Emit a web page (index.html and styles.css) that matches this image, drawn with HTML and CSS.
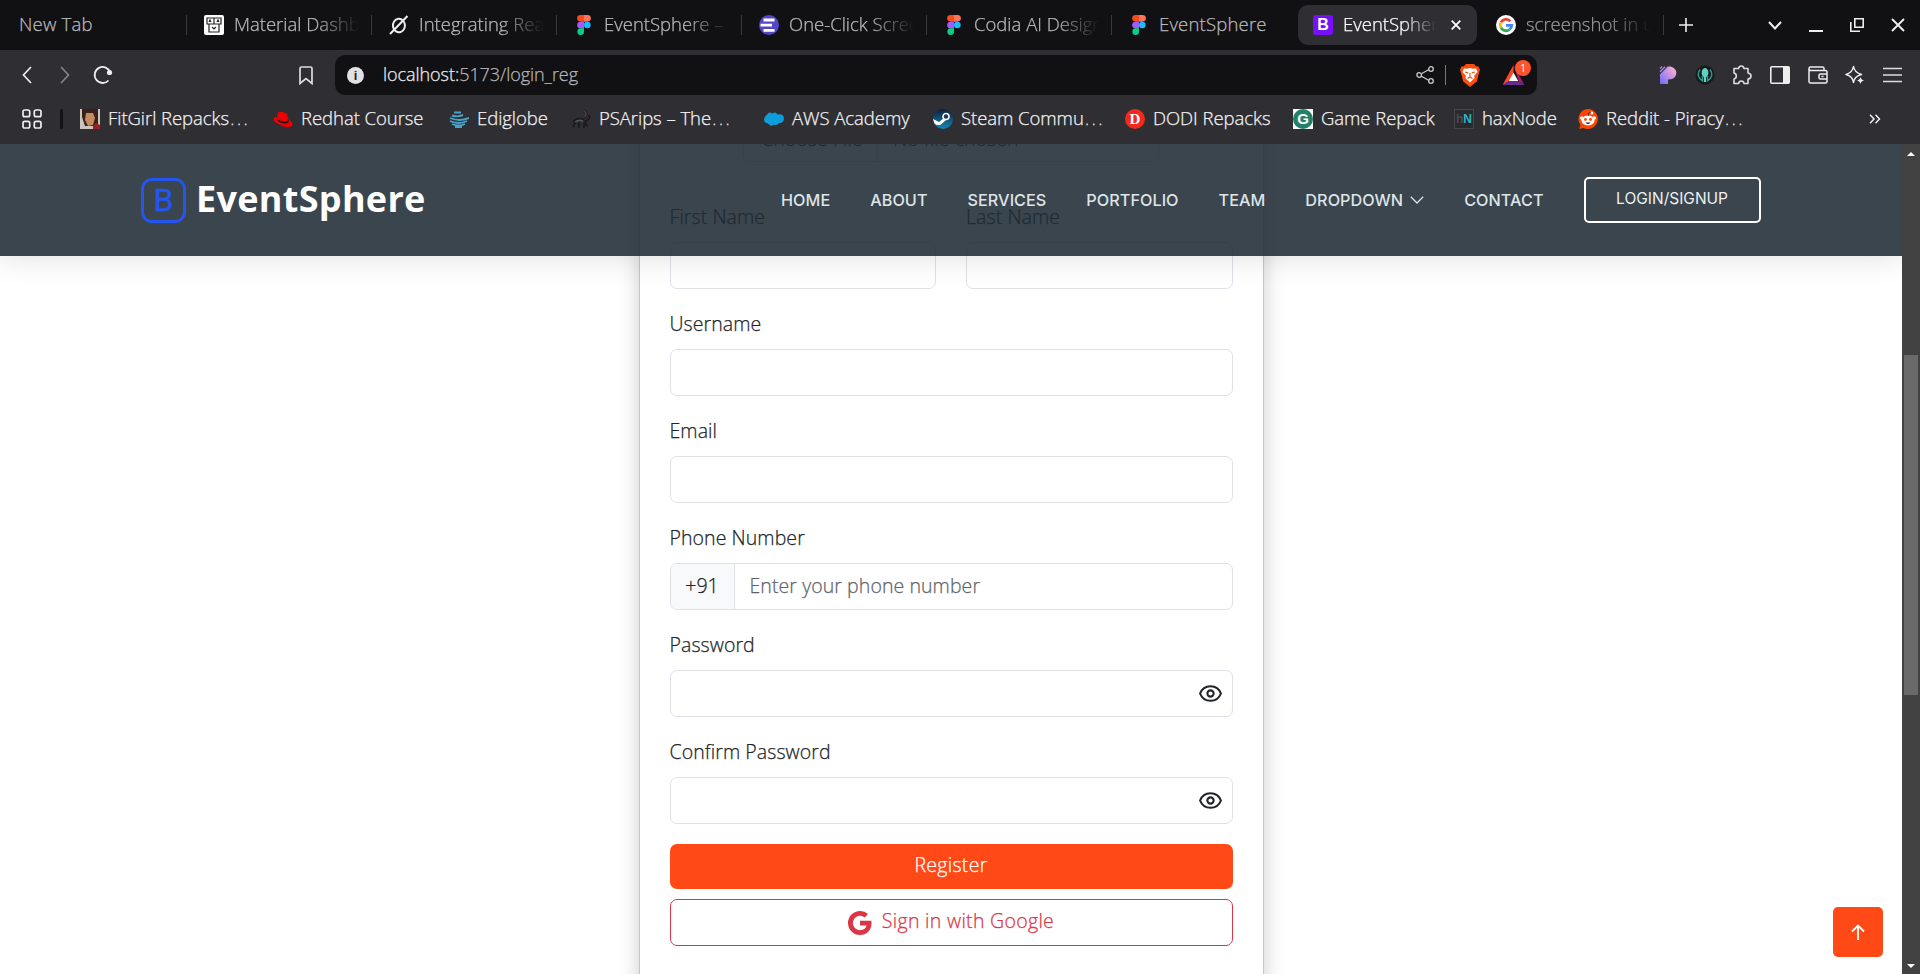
FILE: index.html
```html
<!DOCTYPE html>
<html lang="en">
<head>
<meta charset="utf-8">
<title>EventSphere</title>
<link rel="stylesheet" href="styles.css">
</head>
<body>
<svg class="defs" width="0" height="0">
  <symbol id="figma" viewBox="0 0 14 20"><path fill="#f24e1e" d="M7 0H3.500a3.300 3.300 0 0 0 0 6.660H7z"/><path fill="#ff7262" d="M7 0h3.500a3.300 3.300 0 0 1 0 6.660H7z"/><path fill="#a259ff" d="M7 6.660H3.500a3.300 3.300 0 0 0 0 6.670H7z"/><circle cx="10.300" cy="10" r="3.330" fill="#1abcfe"/><path fill="#0acf83" d="M7 13.330H3.500A3.330 3.330 0 1 0 7 16.700z"/></symbol>
  <symbol id="eye" viewBox="0 0 24 24"><path fill="none" stroke="#212529" stroke-width="2" d="M2 12C3.500 8 7 5 12 5s8.500 3 10 7c-1.500 4-5 7-10 7S3.500 16 2 12z"/><circle cx="12" cy="12" r="3" fill="none" stroke="#212529" stroke-width="2"/></symbol>
</svg>
<div class="browser">
  <div class="tabs">
    <div class="tab first"><span class="title t-new">New Tab</span></div>
    <div class="tab"><svg class="fav" viewBox="0 0 20 20"><rect width="20" height="20" rx="2" fill="#fff"/><path d="M3 3h14v6H3zM10 3v6M5 9v8h10V9M8 12l2 2 2-2M5 7l1-2 1 2M13 7l1-2 1 2" fill="none" stroke="#222" stroke-width="1.200"/></svg><span class="title">Material Dashboard</span></div>
    <div class="tab"><svg class="fav" viewBox="0 0 20 20"><path d="M14 5.500A6 6.800 0 1 0 15.500 13c.9-2.500.5-5-1.500-7.500zM1 19L18.500 1" fill="none" stroke="#eee" stroke-width="2"/></svg><span class="title">Integrating React</span></div>
    <div class="tab"><svg class="fav" viewBox="0 0 14 20"><use href="#figma"/></svg><span class="title">EventSphere – Figma</span></div>
    <div class="tab"><svg class="fav" viewBox="0 0 20 20"><circle cx="10" cy="10" r="10" fill="#5347c5"/><path d="M4.500 5h11M1.500 10.200H13M4.500 15.300h11" stroke="#fff" stroke-width="2.800"/></svg><span class="title">One-Click Screenshot</span></div>
    <div class="tab"><svg class="fav" viewBox="0 0 14 20"><use href="#figma"/></svg><span class="title">Codia AI Design</span></div>
    <div class="tab noline"><svg class="fav" viewBox="0 0 14 20"><use href="#figma"/></svg><span class="title t-new">EventSphere</span></div>
    <div class="tab active"><span class="fav bs">B</span><span class="title">EventSphere</span><svg class="x" viewBox="0 0 10 10"><path d="M.7.7l8.600 8.600M9.300.7L.7 9.300" stroke="#fff" stroke-width="1.800"/></svg></div>
    <div class="tab"><svg class="fav" viewBox="0 0 20 20"><circle cx="10" cy="10" r="10" fill="#fff"/><g fill="none" stroke-width="2.800"><path stroke="#ea4335" d="M14.300 6.200A5.800 5.800 0 0 0 5 7.200"/><path stroke="#fbbc05" d="M5 7.200a5.800 5.800 0 0 0 0 5.600"/><path stroke="#34a853" d="M5 12.800a5.800 5.800 0 0 0 8.600 1.700"/><path stroke="#4285f4" d="M13.600 14.500a5.800 5.800 0 0 0 2.100-4.100H10"/></g></svg><span class="title dim">screenshot in ubuntu</span></div>
    <svg class="plus" viewBox="0 0 14 14"><path d="M7 0v14M0 7h14" stroke="#eee" stroke-width="1.600"/></svg>
    <div class="win">
      <svg width="14" height="9" viewBox="0 0 14 9"><path d="M1 1l6 6.500L13 1" fill="none" stroke="#eee" stroke-width="2"/></svg>
      <svg width="14" height="14" viewBox="0 0 14 14"><path d="M0 13h14" stroke="#eee" stroke-width="2"/></svg>
      <svg width="14" height="14" viewBox="0 0 14 14"><path d="M4.800.8h8.400v8.400H4.800zM.8 4v9.200H10" fill="none" stroke="#eee" stroke-width="1.600"/></svg>
      <svg width="14" height="14" viewBox="0 0 14 14"><path d="M1 1l12 12M13 1L1 13" stroke="#eee" stroke-width="1.900"/></svg>
    </div>
  </div>
  <div class="toolbar">
    <div class="navbtns">
      <svg width="10" height="18" viewBox="0 0 10 18"><path d="M9 1L1.500 9 9 17" fill="none" stroke="#eee" stroke-width="1.700"/></svg>
      <svg width="10" height="18" viewBox="0 0 10 18"><path d="M1 1l7.500 8L1 17" fill="none" stroke="#85848a" stroke-width="1.700"/></svg>
      <svg class="reload" width="20" height="20" viewBox="0 0 20 20"><path d="M15.500 15.500A8 8 0 1 1 17.300 7.500" fill="none" stroke="#eee" stroke-width="1.800"/><circle cx="16.500" cy="7.500" r="2.600" fill="#eee"/></svg>
    </div>
    <svg class="bookmark" viewBox="0 0 14 19"><path d="M1 2.500Q1 1 2.500 1h9Q13 1 13 2.500V17.500l-6-5-6 5z" fill="none" stroke="#ddd" stroke-width="1.700"/></svg>
    <div class="url">
      <span class="info">i</span><span class="addr">localhost:<span class="path">5173/login_reg</span></span>
      <svg class="share" viewBox="0 0 18 18"><path d="M5 8l8-4.500M5 10l8 4.500" stroke="#ccc" stroke-width="1.200"/><g fill="none" stroke="#ccc" stroke-width="1.300"><circle cx="3.200" cy="9" r="2.300"/><circle cx="15" cy="3" r="2.300"/><circle cx="15" cy="15" r="2.300"/></g></svg>
      <span class="sep"></span>
      <svg class="brave" viewBox="0 0 20 23"><path d="M6 0h8l2 2.200 2.500.3L20 6l-.7 2-2.500 9.500L10 23l-6.800-5.500L.7 8 0 6l1.500-3.500L4 2.200z" fill="#fb4d0c"/><path d="M4 4.500l3 .3 3-.8 3 .8 3-.3 1.500 3.500-3.500 4 .7 2L10 18.500 5.300 14l.7-2-3.500-4z" fill="#fff"/><path d="M5 8l3.300.8M15 8l-3.300.8M10 9v4M7.500 14.500l2.500-1.500 2.500 1.500" fill="none" stroke="#fb4d0c" stroke-width="1.200"/></svg>
      <div class="bat"><svg width="23" height="20" viewBox="0 0 22 20"><path d="M11 0L0 20l11-6z" fill="#ff4724"/><path d="M11 0l11 20-6-4z" fill="#9e1f63"/><path d="M0 20h22l-6-4H6z" fill="#662d91"/><path d="M11 7.500L6.300 16h9.400z" fill="#fff"/></svg><span class="badge">1</span></div>
    </div>
    <div class="exts">
      <svg width="18" height="18" viewBox="0 0 18 18"><defs><linearGradient id="pg" x1="1" y1="0" x2="0" y2="1"><stop offset=".2" stop-color="#f3a5d4"/><stop offset="1" stop-color="#6a6cff"/></linearGradient></defs><path d="M9 .5Q12 0 14 1.500C17 3 18 6 17 9c-1 3-4 4.500-8 4.500V18H1V9.500z" fill="url(#pg)"/><path d="M1 2.500L3 .5M1 6L6 .8M1 9.500L9 1" stroke="#a58df0" stroke-width="1.300"/></svg>
      <svg width="20" height="20" viewBox="0 0 20 20"><circle cx="10" cy="10" r="9.500" fill="#17191c"/><path d="M10 3C7 3.500 6 7 7 10l2 2.500V17h2v-4.500L13 10c1-3 0-6.500-3-7z" fill="#5fd3c0"/><path d="M5 4.500c-3 4-2.500 8 2.500 11.500V11M15 4.500c3 4 2.500 8-2.500 11.500V11" fill="none" stroke="#2c9a8c" stroke-width="1.500"/></svg>
      <svg width="20" height="20" viewBox="0 0 20 20"><path d="M2 3.500h4.500Q7 1 9.300 1T12 3.500h4V8q3 .3 3 3t-3 3v4.500h-4Q11.700 16 9.300 16t-2.600 2.500H2V14q2.300-.5 2.300-3T2 8z" fill="none" stroke="#ddd" stroke-width="1.600" stroke-linejoin="round"/></svg>
      <svg width="20" height="18" viewBox="0 0 20 18"><rect x=".8" y=".8" width="18.400" height="16.400" rx="1" fill="none" stroke="#eee" stroke-width="1.600"/><path d="M13 1h6v16h-6z" fill="#eee"/></svg>
      <svg width="20" height="18" viewBox="0 0 20 18"><path d="M16 4V2.500Q16 1 14.500 1h-12Q1 1 1 2.700 1 4.500 3 4.500h14.500q1.500 0 1.500 1.500v9.500q0 1.500-1.500 1.500h-15Q1 17 1 15.500V3M19 8h-6.500Q11 8 11 9.500v2q0 1.500 1.500 1.500H19M13.500 10.500h2" fill="none" stroke="#eee" stroke-width="1.500"/></svg>
      <svg width="20" height="20" viewBox="0 0 20 20"><path d="M8.500 1.500q1 6 8 8-7 1.500-8 8-1-6.500-7.500-8 6.500-2 7.500-8z" fill="none" stroke="#eee" stroke-width="1.500" stroke-linejoin="round"/><path d="M15.500 11.500q.6 3.400 4 4-3.400.6-4 4-.6-3.400-4-4 3.400-.6 4-4z" fill="#eee" stroke="#2f2e33" stroke-width=".5"/></svg>
      <svg width="20" height="16" viewBox="0 0 20 16"><path d="M0 1.500h19M0 8h19M0 14.500h19" stroke="#ddd" stroke-width="1.600"/></svg>
    </div>
  </div>
  <div class="marks">
    <svg class="grid" viewBox="0 0 20 20"><g fill="none" stroke="#eee" stroke-width="1.700"><rect x="1" y="1" width="6.700" height="6.700" rx="1.700"/><rect x="12.300" y="1" width="6.700" height="6.700" rx="1.700"/><rect x="1" y="12.300" width="6.700" height="6.700" rx="1.700"/><rect x="12.300" y="12.300" width="6.700" height="6.700" rx="1.700"/></g></svg>
    <span class="bar"></span>
    <div class="mk m1"><svg viewBox="0 0 20 20"><path fill="#c9c4c0" d="M0 0h20v20H0z"/><path fill="#3a2016" d="M2 0h16v15l-4 2H5L2 8z"/><path fill="#c48a62" d="M6 4h7l2 5-2 7-5 1-3-6z"/><path fill="#9b2020" d="M13 17l3-3 4 2v4h-7z"/></svg><span>FitGirl Repacks<i>…</i></span></div>
    <div class="mk m2"><svg viewBox="0 0 20 20"><path fill="#e00" d="M5 3.500Q8 2 11 3.500l3 1 1.500 6Q20 13 19.500 16q-3 4-11 .5Q0 13 .5 9.500 1 7.500 4 8z"/><path fill="#151515" d="M4 8q0 3 6 4.500 5 1 5.500-2 1.500 4-4 4Q3 13.500 4 8z"/></svg><span>Redhat Course</span></div>
    <div class="mk m3"><svg viewBox="0 0 20 20"><path d="M5 3.500h7M3 6.500q5 2 11-.5M1 9q9 4 19 0M1 12q9 4 17 0M3 15q7 3 13 0M6 18h7" stroke="#4aa3c7" stroke-width="1.900" fill="none"/></svg><span>Ediglobe</span></div>
    <div class="mk m4"><svg viewBox="0 0 20 20"><path d="M2 13q4-5 9-3t3 5l3 2M5 12l-3 6M8 13v6M13 14v5M15 12q5-3 3-6M14 9Q18 3 12 2" fill="none" stroke="#1c1c1e" stroke-width="2"/><path d="M4 13q4-3 8-1" stroke="#555558" stroke-width="1.500" fill="none"/><path d="M14 8q3-5-2-6" stroke="#743a3b" stroke-width="1.200" fill="none"/></svg><span>PSArips – The<i>…</i></span></div>
    <div class="mk m5"><svg viewBox="0 0 20 20"><path fill="#0d9ddb" d="M3 5.500Q5.500 2 8.500 4.800 11.500 2 13.500 5.500 19.500 4 20 9.500q-.5 5-5 4.500-2 3-5 1.500-3 3-6-1Q0 14 0 10.500 0 8 3 5.500z"/></svg><span>AWS Academy</span></div>
    <div class="mk m6"><svg viewBox="0 0 20 20"><defs><linearGradient id="st" x1="0" y1="0" x2="0" y2="1"><stop stop-color="#101e3c"/><stop offset="1" stop-color="#1387b8"/></linearGradient></defs><circle cx="10" cy="10" r="10" fill="url(#st)"/><path d="M0 10l6 3 5-4 2 2-5 4.500Q4 17 1.500 14.500z" fill="#fff"/><circle cx="13" cy="7.500" r="3" fill="#23365e" stroke="#fff" stroke-width="1.500"/></svg><span>Steam Commu<i>…</i></span></div>
    <div class="mk m7"><b class="ic dodi">D</b><span>DODI Repacks</span></div>
    <div class="mk m8"><b class="ic game"><b>G</b></b><span>Game Repack</span></div>
    <div class="mk m9"><b class="ic hax"><u>h</u>N</b><span>haxNode</span></div>
    <div class="mk m10"><svg viewBox="0 0 20 20"><path fill="#ff4500" d="M10 0a10 10 0 1 1-4.500 19L1 20l1.500-4A10 10 0 0 1 10 0z"/><ellipse cx="10" cy="11.500" rx="6.500" ry="5" fill="#fff"/><circle cx="3.800" cy="9" r="1.800" fill="#fff"/><circle cx="16.200" cy="9" r="1.800" fill="#fff"/><circle cx="13.800" cy="4" r="1.500" fill="#fff"/><path d="M10 7l1-3.500 2.500.5" fill="none" stroke="#333" stroke-width=".8"/><circle cx="7.500" cy="10.500" r="1.400" fill="#ff4500"/><circle cx="12.500" cy="10.500" r="1.400" fill="#ff4500"/><path d="M7.500 13.500h5q-2.500 3-5 0z" fill="#222"/></svg><span>Reddit - Piracy<i>…</i></span></div>
    <svg class="more" viewBox="0 0 12 10"><path d="M1 .8L5 5 1 9.200M6.500.8l4 4.200-4 4.200" fill="none" stroke="#eee" stroke-width="1.500"/></svg>
  </div>
</div>
<div class="view">
  <main class="page">
    <header class="header">
      <a class="brand"><span class="logo"><span>B</span></span><span class="name">EventSphere</span></a>
      <nav class="nav"><a>HOME</a><a>ABOUT</a><a>SERVICES</a><a>PORTFOLIO</a><a>TEAM</a><a>DROPDOWN<svg viewBox="0 0 14 8"><path d="M.8.8L7 7 13.200.8" fill="none" stroke="#dfe4e8" stroke-width="1.300"/></svg></a><a>CONTACT</a></nav>
      <a class="login">LOGIN/SIGNUP</a>
    </header>
    <form class="card">
      <div class="file"><span class="choose">Choose File</span><span class="none">No file chosen</span></div>
      <div class="two">
        <div class="field"><label>First Name</label><div class="input"></div></div>
        <div class="field"><label>Last Name</label><div class="input"></div></div>
      </div>
      <div class="field"><label>Username</label><div class="input"></div></div>
      <div class="field"><label>Email</label><div class="input"></div></div>
      <div class="field"><label>Phone Number</label><div class="input phone"><span class="code">+91</span><span class="ph">Enter your phone number</span></div></div>
      <div class="field"><label>Password</label><div class="input pw"><svg><use href="#eye"/></svg></div></div>
      <div class="field"><label>Confirm Password</label><div class="input pw"><svg><use href="#eye"/></svg></div></div>
      <div class="btn register">Register</div>
      <div class="btn google"><svg width="24" height="24" viewBox="0 0 16 16"><path fill="#dc3545" d="M15.545 6.558a9.420 9.420 0 0 1 .139 1.626c0 2.434-.87 4.492-2.384 5.885h.002C11.978 15.292 10.158 16 8 16A8 8 0 1 1 8 0a7.689 7.689 0 0 1 5.352 2.082l-2.284 2.284A4.347 4.347 0 0 0 8 3.166c-2.087 0-3.860 1.408-4.492 3.304a4.792 4.792 0 0 0 0 3.063h.003c.635 1.893 2.405 3.301 4.492 3.301 1.078 0 2.004-.276 2.722-.764h-.003a3.702 3.702 0 0 0 1.599-2.431H8v-3.080h7.545z"/></svg><span>Sign in with Google</span></div>
    </form>
    <a class="top"><svg width="14" height="16" viewBox="0 0 14 16"><path d="M7 16V1.500M1 7.500l6-6 6 6" fill="none" stroke="#fff" stroke-width="1.800"/></svg></a>
  </main>
  <div class="scroll"><span class="up"></span><span class="thumb"></span><span class="down"></span></div>
</div>
</body>
</html>
```
FILE: styles.css
```css
* { box-sizing: border-box; }
body { margin: 0; width: 1920px; height: 974px; overflow: hidden; display: flex; flex-direction: column; font-family: "Open Sans", "Noto Sans", sans-serif; font-weight: 350; font-size: 18.5px; background: #fff; }
svg { display: block; flex: none; }
.defs { position: absolute; }

.browser { height: 144px; background: #2f2e33; color: #ececee; flex: none; }
.tabs { height: 50px; background: #111113; display: flex; align-items: center; }
.tab { width: 185px; height: 20px; flex: none; display: flex; align-items: center; padding-left: 17px; border-right: 1px solid #3a3a3d; color: #b9b9bc; }
.tab.first { width: 187px; padding-left: 19px; }
.tab.noline { border-color: transparent; }
.fav { width: 20px; height: 20px; margin-right: 10px; flex: none; }
.title { width: 125px; line-height: 26px; white-space: nowrap; overflow: hidden; letter-spacing: 0; padding-bottom: 2px; -webkit-text-stroke: 0.25px; -webkit-mask-image: linear-gradient(90deg, #000 65%, transparent); mask-image: linear-gradient(90deg, #000 65%, transparent); }
.t-new { letter-spacing: 0.2px; -webkit-mask-image: none; mask-image: none; }
.dim { color: #99999c; }
.tab.active { width: 179px; height: 40px; border: 0; border-radius: 10px; background: #2f2e33; color: #fff; padding-left: 15px; margin: 0 2px 0 1px; }
.active .title { width: 93px; }
.bs { background: #7511f5; border-radius: 3px; color: #fff; font: 700 16px/20px "Liberation Sans", sans-serif; text-align: center; margin-right: 10px; }
.x { width: 10px; height: 10px; margin-left: 15px; }
.plus { width: 14px; height: 14px; margin-left: 15px; }
.win { margin-left: auto; margin-right: 15px; display: flex; align-items: center; gap: 27px; }

.toolbar { height: 50px; display: flex; align-items: center; }
.navbtns { display: flex; align-items: center; gap: 28px; margin-left: 22px; width: 277px; }
.reload { margin-left: -5px; }
.bookmark { width: 14px; height: 19px; margin-right: 22px; }
.url { width: 1202px; height: 40px; border-radius: 10px; background: #111113; display: flex; align-items: center; padding-left: 12px; }
.info { width: 17px; height: 17px; border-radius: 50%; background: #e2e2e5; color: #222; font: 700 13px/17px "Liberation Sans", sans-serif; text-align: center; }
.addr { width: 1052px; flex: none; padding: 0 0 2px 19px; font-size: 18px; letter-spacing: -0.05px; -webkit-text-stroke: 0.25px; }
.path { color: #b5b5b8; }
.share { width: 18px; height: 18px; }
.sep { width: 1px; height: 20px; background: #77777a; margin: 0 14px 0 11px; }
.brave { width: 20px; height: 23px; }
.bat { position: relative; margin-left: 22px; }
.badge { position: absolute; left: 13px; top: -5px; width: 16px; height: 16px; border-radius: 50%; background: #fb542b; color: #fff; font-size: 10px; font-weight: 400; line-height: 16px; text-align: center; }
.exts { margin-left: 122px; width: 244px; display: flex; align-items: center; justify-content: space-between; }

.marks { height: 38px; display: flex; align-items: center; color: #f2f2f3; white-space: nowrap; }
.grid { width: 20px; height: 20px; margin-left: 22px; }
.bar { width: 3px; height: 20px; border-radius: 2px; background: #131315; margin: 0 17px 0 18px; }
.mk { display: flex; align-items: center; gap: 8px; letter-spacing: -0.05px; flex: none; }
.mk > span { padding-bottom: 3px; -webkit-text-stroke: 0.25px; }
.mk i { font: 300 20px/18px "DejaVu Sans", sans-serif; letter-spacing: 0; }
.mk svg, .ic { width: 20px; height: 20px; flex: none; }
.m1 { width: 193px; } .m2 { width: 176px; } .m3 { width: 122px; } .m4 { width: 193px; } .m5 { width: 169px; }
.m6 { width: 192px; } .m7 { width: 168px; } .m8 { width: 161px; } .m9 { width: 124px; } .m10 { width: 291px; }
.ic { text-align: center; line-height: 20px; letter-spacing: 0; color: #fff; }
.dodi { border-radius: 50%; background: #f12a1d; font: 700 15px/20px "Liberation Serif", serif; }
.game { background: #fff; }
.game b { display: block; border-radius: 50%; background: #24806b; font: 700 15px/20px "Liberation Sans", sans-serif; }
.hax { border: 1px solid #45484a; background: #292a2d; color: #2bb5c9; font: 700 12px/18px "Liberation Sans", sans-serif; }
.hax u { color: #4c4c50; text-decoration: none; }
.more { width: 12px; height: 10px; }

.view { height: 830px; display: flex; }
.page { width: 1902px; position: relative; overflow: hidden; color: #212529; }
.header { position: absolute; z-index: 2; left: 0; top: 0; width: 1902px; height: 112px; background: rgba(31, 43, 52, 0.88); box-shadow: 0 0 30px rgba(0, 0, 0, 0.14); display: flex; align-items: center; padding-left: 141px; font-family: Inter, sans-serif; }
.brand { display: flex; align-items: center; gap: 10px; width: 640px; }
.logo { width: 45px; height: 45px; border: 3px solid #2456ef; border-radius: 11px; display: flex; align-items: center; justify-content: center; color: #2456ef; font: 400 32px/38px Roboto, sans-serif; -webkit-text-stroke: 0.4px; }
.name { font: 700 36px/44px "Open Sans", sans-serif; letter-spacing: 0.3px; padding-bottom: 3px; color: #fff; }
.nav { display: flex; gap: 40px; color: #dfe4e8; font-size: 16.2px; font-weight: 500; letter-spacing: 0.05px; line-height: 20px; white-space: nowrap; }
.nav a { display: flex; align-items: center; }
.nav svg { width: 14px; height: 8px; margin-left: 7px; }
.login { margin-left: 40px; width: 177px; height: 46px; border: 2px solid #fff; border-radius: 5px; color: #eef0f2; font-weight: 400; font-size: 15.5px; line-height: 40px; text-align: center; }

.card { width: 625px; height: 940px; margin: -81px auto 0; padding: 51px 30px 0; border: 1px solid #c6c6c7; box-shadow: 0 0 20px rgba(0, 0, 0, 0.2); font-size: 19.5px; letter-spacing: 0.08px; line-height: 30px; -webkit-text-stroke: 0.25px; }
.file { width: 416px; height: 47px; margin: 0 auto 42px; border: 1px solid #dee2e6; border-radius: 7px; display: flex; line-height: 46px; }
.choose { width: 134px; height: 45px; padding-left: 17px; border-right: 1px solid #dee2e6; background: #f8f9fa; border-radius: 6px 0 0 6px; }
.none { padding-left: 15px; }
.two { display: grid; grid-template-columns: 1fr 1fr; gap: 30px; }
.field { height: 107px; }
label { display: block; height: 38px; line-height: 26px; }
.input { height: 47px; border: 1px solid #dee2e6; border-radius: 7px; background: #fff; }
.phone { display: flex; line-height: 43px; overflow: hidden; }
.code { width: 64px; text-align: center; background: #f8f9fa; border-right: 1px solid #dee2e6; }
.ph { padding-left: 15px; color: #5f6468; }
.pw { display: flex; align-items: center; justify-content: flex-end; padding-right: 9px; }
.pw svg { width: 25px; height: 25px; }
.btn { border-radius: 7px; text-align: center; letter-spacing: 0.3px; }
.register { height: 45px; margin-top: -2px; background: #ff4a17; color: #fff; line-height: 42px; }
.google { height: 47px; margin-top: 10px; border: 1px solid #dc3545; color: #dc3545; display: flex; align-items: center; justify-content: center; gap: 10px; }
.google span { line-height: 28px; padding-bottom: 3px; }
.top { position: absolute; left: 1833px; top: 763px; width: 50px; height: 50px; border-radius: 5px; background: #ff4a17; display: flex; align-items: center; justify-content: center; }

.scroll { width: 18px; background: #424242; display: flex; flex-direction: column; align-items: center; }
.up { margin-top: 8px; border: 4px solid transparent; border-top: 0; border-bottom-color: #fff; }
.thumb { width: 14px; height: 340px; margin-top: 199px; background: #6a6a6a; }
.down { margin-top: auto; margin-bottom: 6px; border: 4px solid transparent; border-bottom: 0; border-top-color: #fff; }
```
